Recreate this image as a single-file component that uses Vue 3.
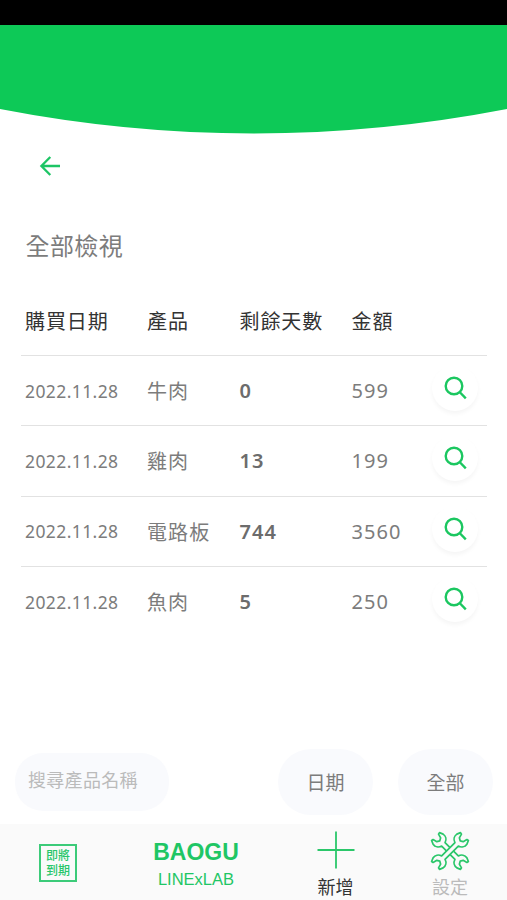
<script setup>
import { ref, computed } from 'vue'

const keyword = ref('')
const items = ref([
  { date: '2022.11.28', name: '牛肉', days: 0, price: 599 },
  { date: '2022.11.28', name: '雞肉', days: 13, price: 199 },
  { date: '2022.11.28', name: '電路板', days: 744, price: 3560 },
  { date: '2022.11.28', name: '魚肉', days: 5, price: 250 }
])

const filtered = computed(() => items.value.filter(item => item.name.includes(keyword.value)))

const wrench = 'M-9.8 -2.5H9.8C10.8 -6 14 -8 17.5 -7.4L21.3 -5.8L20.9 -4L16.6 -2.8L15 0L16.6 2.8L20.9 4L21.3 5.8L17.5 7.4C14 8 10.8 6 9.8 2.5H-9.8C-10.8 6 -14 8 -17.5 7.4L-21.3 5.8L-20.9 4L-16.6 2.8L-15 0L-16.6 -2.8L-20.9 -4L-21.3 -5.8L-17.5 -7.4C-14 -8 -10.8 -6 -9.8 -2.5Z'
</script>

<template>
  <div class="page">
    <div class="status-bar"></div>
    <svg class="banner" viewBox="0 0 507 109" preserveAspectRatio="none">
      <path d="M0 0H507V84Q253.5 133 0 84Z" fill="#0dc957" />
    </svg>

    <main>
      <button class="back">
        <svg width="22" height="22" viewBox="0 0 22 22" fill="none" stroke="#1dc565" stroke-width="2.3">
          <path d="M21 11H2.5M11.3 2L2.4 11L11.3 20" />
        </svg>
      </button>
      <h1>全部檢視</h1>

      <div class="table">
        <div class="row head">
          <span>購買日期</span>
          <span>產品</span>
          <span>剩餘天數</span>
          <span>金額</span>
        </div>
        <div v-for="item in filtered" :key="item.name" class="row">
          <span class="date">{{ item.date }}</span>
          <span>{{ item.name }}</span>
          <span class="days">{{ item.days }}</span>
          <span>{{ item.price }}</span>
          <button class="detail">
            <svg width="24" height="24" viewBox="0 0 24 24" fill="none" stroke="#1bc760" stroke-width="2.4">
              <circle cx="11" cy="10" r="8.3" />
              <path d="M16.6 16L22.8 22.3" />
            </svg>
          </button>
        </div>
      </div>
    </main>

    <div class="filters">
      <input v-model="keyword" type="text" placeholder="搜尋產品名稱">
      <button>日期</button>
      <button>全部</button>
    </div>

    <nav>
      <div class="tab expiring">
        <div class="stamp">
          <span>即將</span>
          <span>到期</span>
        </div>
      </div>
      <div class="tab logo">
        <strong>BAOGU</strong>
        <span>LINExLAB</span>
      </div>
      <div class="tab add">
        <svg width="38" height="38" viewBox="0 0 38 38" stroke="#2bc76a" stroke-width="1.8">
          <path d="M19 0.5V37.5M0.5 19H37.5" />
        </svg>
        <span>新增</span>
      </div>
      <div class="tab settings">
        <svg width="40" height="40" viewBox="-20 -20 40 40" fill="#fafafa" stroke="#2bc76a" stroke-width="1.8" stroke-linejoin="round">
          <path :d="wrench" transform="rotate(45) scale(0.96)" />
          <path :d="wrench" transform="rotate(-45) scale(0.96)" />
        </svg>
        <span>設定</span>
      </div>
    </nav>
  </div>
</template>

<style>
body {
  margin: 0;
}
</style>

<style scoped>
.page {
  width: 507px;
  height: 900px;
  display: flex;
  flex-direction: column;
  overflow: hidden;
  background: #fff;
  color: #7c7c7c;
  font-family: "Noto Sans", "Noto Sans CJK TC", sans-serif;
}
button, input {
  border: none;
  padding: 0;
  font-family: inherit;
  color: inherit;
}
.status-bar {
  height: 25px;
  flex: none;
  background: #000;
}
.banner {
  display: block;
  width: 507px;
  height: 109px;
  flex: none;
}
main {
  flex: 1;
  padding: 21px 20px 0 21px;
}
.back {
  display: block;
  width: 22px;
  height: 22px;
  margin-left: 18px;
  background: none;
}
.back svg {
  display: block;
}
h1 {
  margin: 50px 0 0 4.5px;
  font-size: 24px;
  line-height: 38px;
  font-weight: 400;
  letter-spacing: 0.4px;
}
.table {
  margin-top: 20.6px;
}
.row {
  display: grid;
  grid-template-columns: 122px 92.5px 112px 80.5px 48px;
  align-items: center;
  height: 70.35px;
  box-sizing: border-box;
  padding-left: 4px;
  border-bottom: 1px solid #e2e2e2;
  font-size: 20px;
  letter-spacing: 1.1px;
}
.row:last-child {
  border-bottom-color: transparent;
}
.head {
  color: #333;
  letter-spacing: 0.9px;
}
.date {
  font-size: 17.5px;
  letter-spacing: 0.4px;
}
.days {
  font-weight: 600;
  color: #6c6c6c;
}
.detail {
  display: flex;
  align-items: center;
  justify-content: center;
  width: 46px;
  height: 46px;
  margin-top: -5px;
  border-radius: 50%;
  background: #fff;
  box-shadow: 0 3px 4px rgba(0, 0, 0, 0.04);
}
.filters {
  display: flex;
  align-items: center;
  height: 66px;
  padding: 0 14px 9px 15px;
}
.filters input {
  width: 154px;
  height: 58px;
  box-sizing: border-box;
  padding: 0 0 4px 13px;
  margin-right: 109px;
  border-radius: 28px;
  background: #f9fafd;
  font-size: 18px;
  letter-spacing: 0.3px;
}
.filters input::placeholder {
  color: #bbb;
}
.filters button {
  width: 95px;
  height: 66px;
  border-radius: 33px;
  background: #f9fafd;
  font-size: 19px;
}
.filters button + button {
  margin-left: 25px;
}
nav {
  display: flex;
  height: 76px;
  flex: none;
  background: #fafafa;
}
.tab {
  display: flex;
  flex-direction: column;
  align-items: center;
  font-size: 18px;
  line-height: 26px;
}
.expiring {
  width: 116px;
}
.stamp {
  display: flex;
  flex-direction: column;
  align-items: center;
  justify-content: center;
  width: 34px;
  height: 32px;
  margin-top: 20px;
  padding-top: 2px;
  border: 2px solid #3ccb79;
  font-family: "Liberation Sans", "Noto Sans CJK TC", sans-serif;
  font-size: 12px;
  line-height: 15px;
  font-weight: 500;
  color: #27c66b;
}
.logo {
  width: 160px;
  font-family: "Liberation Sans", sans-serif;
  color: #1fc665;
}
.logo strong {
  margin-top: 15px;
  font-size: 23px;
}
.logo span {
  margin-top: 1px;
  font-size: 16.5px;
}
.add {
  width: 119px;
  color: #333;
}
.settings {
  width: 110px;
  color: #bbb;
}
.add svg {
  margin-top: 7px;
}
.settings svg {
  margin-top: 7px;
}
.add span {
  margin-top: 5px;
}
.settings span {
  margin-top: 3px;
}
</style>
